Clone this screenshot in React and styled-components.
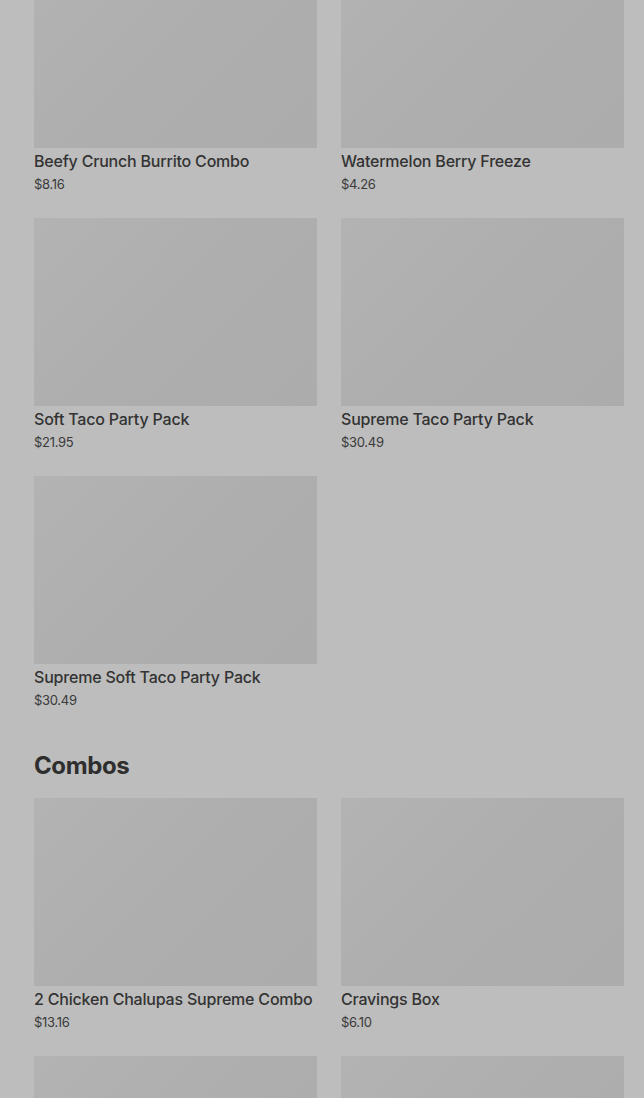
import React from "react";
import styled, { createGlobalStyle } from "styled-components";

const Global = createGlobalStyle`
  html, body { margin: 0; padding: 0; background: #bdbdbd; }
  body { font-family: Inter, "Liberation Sans", sans-serif; color: #303030; }
`;

const Page = styled.main`
  padding: 0 20px 0 34px;
  margin-top: -40px;
  height: 1138px;
  overflow: hidden;
`;

const Section = styled.section`
  display: flex;
  flex-direction: column;
  padding-bottom: 40px;
`;

const Heading = styled.h2`
  margin: 0 0 16px;
  font-size: 24px;
  line-height: 32px;
  font-weight: 700;
  letter-spacing: -0.4px;
  color: #2e2e2e;
`;

const Grid = styled.div`
  display: grid;
  grid-template-columns: 283px 283px;
  column-gap: 24px;
  row-gap: 24px;
`;

const Card = styled.div`
  display: flex;
  flex-direction: column;
`;

const Thumb = styled.div`
  height: 188px;
  background: linear-gradient(135deg, #b3b3b3 0%, #aeaeae 50%, #acacac 100%);
`;

const Name = styled.div`
  margin-top: 3px;
  font-size: 16px;
  line-height: 20px;
  font-weight: 500;
  color: #333;
  white-space: nowrap;
  letter-spacing: -0.2px;
`;

const Price = styled.div`
  margin-top: 3px;
  font-size: 13px;
  line-height: 20px;
  color: #3a3a3a;
  letter-spacing: -0.3px;
`;

const sections = [
  {
    title: null,
    items: [
      ["Beefy Crunch Burrito Combo", "$8.16"],
      ["Watermelon Berry Freeze", "$4.26"],
      ["Soft Taco Party Pack", "$21.95"],
      ["Supreme Taco Party Pack", "$30.49"],
      ["Supreme Soft Taco Party Pack", "$30.49"],
    ],
  },
  {
    title: "Combos",
    items: [
      ["2 Chicken Chalupas Supreme Combo", "$13.16"],
      ["Cravings Box", "$6.10"],
      ["", ""],
      ["", ""],
    ],
  },
];

export default function App() {
  return (
    <>
      <Global />
      <Page>
        {sections.map((s, i) => (
          <Section key={i}>
            {s.title && <Heading>{s.title}</Heading>}
            <Grid>
              {s.items.map(([n, p], j) => (
                <Card key={j}>
                  <Thumb />
                  <Name>{n}</Name>
                  <Price>{p}</Price>
                </Card>
              ))}
            </Grid>
          </Section>
        ))}
      </Page>
    </>
  );
}
